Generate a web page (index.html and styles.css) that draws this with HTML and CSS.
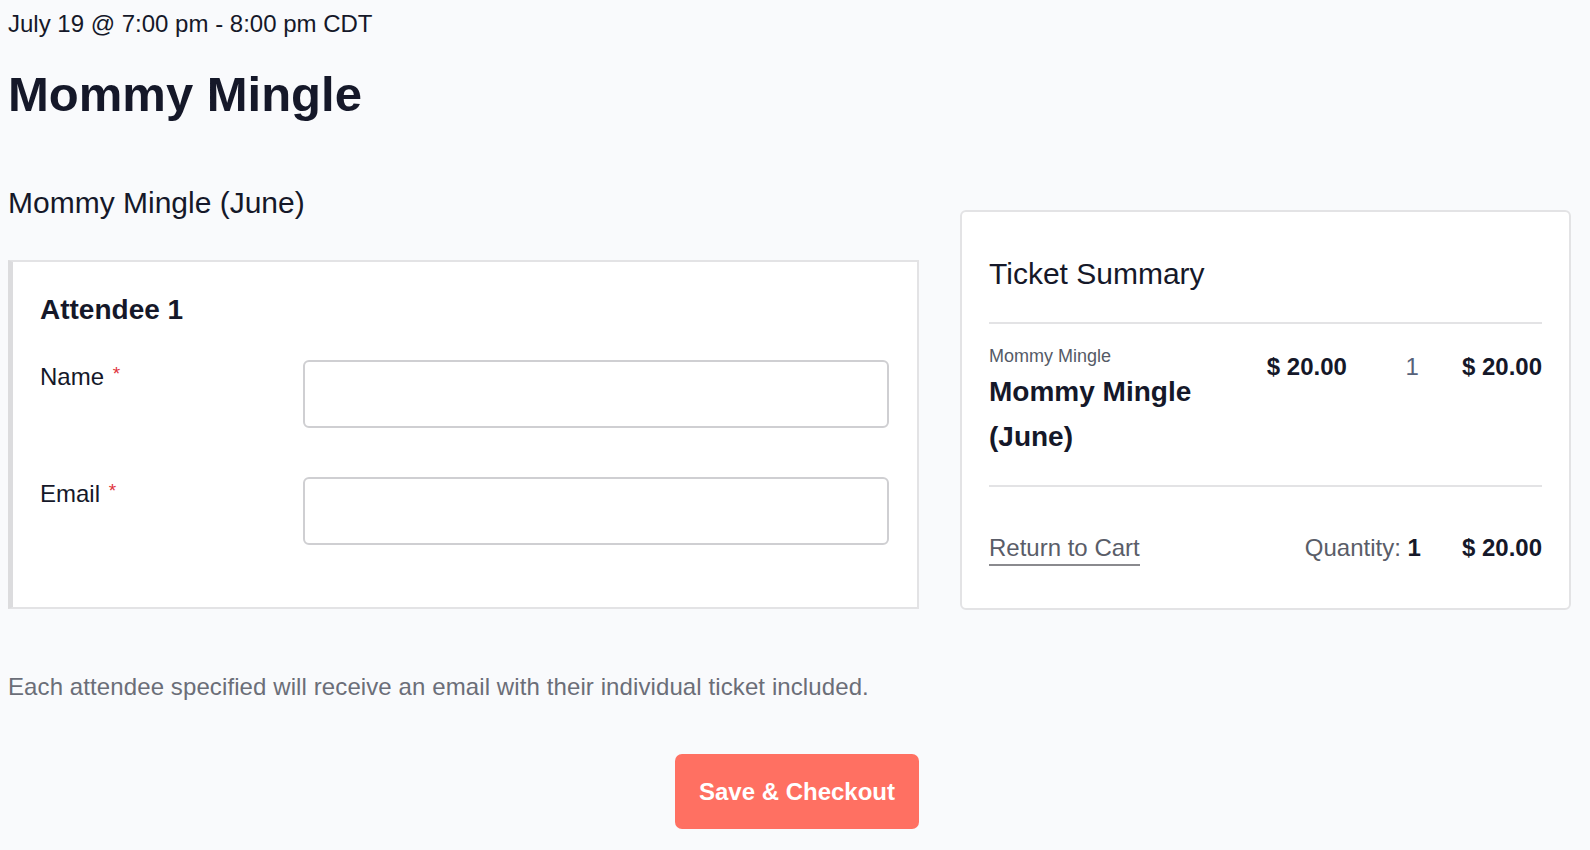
FILE: index.html
```html
<!DOCTYPE html>
<html>
<head>
<meta charset="utf-8">
<link rel="stylesheet" href="styles.css">
</head>
<body>
<div class="page">
  <div class="event-date">July 19 @ 7:00 pm - 8:00 pm CDT</div>
  <h1 class="event-title">Mommy Mingle</h1>
  <div class="layout">
    <div class="main">
      <h2 class="ticket-name">Mommy Mingle (June)</h2>
      <div class="attendee-card">
        <h3 class="attendee-title">Attendee 1</h3>
        <div class="field">
          <label class="field-label">Name <span class="req">*</span></label>
          <input class="field-input" type="text">
        </div>
        <div class="field">
          <label class="field-label">Email <span class="req">*</span></label>
          <input class="field-input" type="text">
        </div>
      </div>
    </div>
    <aside class="summary">
      <h2 class="summary-title">Ticket Summary</h2>
      <div class="summary-item">
        <div class="item-info">
          <div class="item-event">Mommy Mingle</div>
          <div class="item-name">Mommy Mingle (June)</div>
        </div>
        <div class="item-price">$ 20.00</div>
        <div class="item-qty">1</div>
        <div class="item-total">$ 20.00</div>
      </div>
      <div class="summary-footer">
        <a class="return-link" href="#">Return to Cart</a>
        <div class="footer-qty">Quantity: <b>1</b></div>
        <div class="footer-total">$ 20.00</div>
      </div>
    </aside>
  </div>
  <p class="note">Each attendee specified will receive an email with their individual ticket included.</p>
  <div class="actions">
    <button class="checkout-btn">Save &amp; Checkout</button>
  </div>
</div>
</body>
</html>
```
FILE: styles.css
```css
html, body {
  margin: 0;
  background: #f9fafc;
}
body {
  font-family: "Liberation Sans", Arial, sans-serif;
  color: #151829;
}
.page {
  padding: 8px 0 0 8px;
}
.event-date {
  font-size: 24px;
  line-height: 32px;
}
.event-title {
  font-size: 49px;
  font-weight: bold;
  margin: 24px 0 0;
  line-height: 60px;
}
.layout {
  display: flex;
  align-items: flex-start;
  gap: 41px;
}
.main {
  width: 911px;
  flex: none;
}
.ticket-name {
  font-size: 30px;
  font-weight: normal;
  margin: 61px 0 0;
  line-height: 36px;
}
.attendee-card {
  margin-top: 39px;
  background: #fff;
  border: 2px solid #e3e3e5;
  border-left: 5px solid #dcdcde;
  padding: 31px 28px 62px 27px;
}
.attendee-title {
  margin: 0 0 33px;
  font-size: 28px;
  line-height: 34px;
  font-weight: bold;
}
.field {
  display: flex;
  align-items: flex-start;
  margin-bottom: 49px;
}
.field:last-child {
  margin-bottom: 0;
}
.field-label {
  width: 263px;
  flex: none;
  font-size: 24px;
  line-height: 34px;
}
.req {
  color: #e0343c;
  font-size: 19px;
  vertical-align: top;
  line-height: 28px;
  margin-left: 2px;
}
.field-input {
  width: 586px;
  height: 68px;
  box-sizing: border-box;
  border: 2px solid #cfcfd2;
  border-radius: 6px;
  background: #fff;
  margin: 0;
}
.summary {
  width: 611px;
  margin-top: 86px;
  flex: none;
  box-sizing: border-box;
  background: #fff;
  border: 2px solid #e3e3e5;
  border-radius: 6px;
  padding: 42px 27px 42px 27px;
}
.summary-title {
  margin: 0;
  font-size: 30px;
  font-weight: normal;
  line-height: 40px;
  padding-bottom: 28px;
  border-bottom: 2px solid #e3e3e5;
}
.summary-item {
  display: flex;
  align-items: flex-start;
  padding: 21px 0 26px;
  border-bottom: 2px solid #e3e3e5;
}
.item-info {
  flex: 1;
}
.item-event {
  font-size: 18px;
  color: #555a66;
  line-height: 22px;
}
.item-name {
  margin-top: 2px;
  font-size: 28px;
  font-weight: bold;
  line-height: 45px;
  width: 250px;
}
.item-price, .item-total {
  font-size: 24px;
  font-weight: bold;
  line-height: 28px;
  margin-top: 8px;
}
.item-price {
  margin-right: 52px;
}
.item-qty {
  font-size: 24px;
  line-height: 28px;
  margin-top: 8px;
  color: #56627a;
  width: 20px;
  text-align: right;
  margin-right: 43px;
}
.summary-footer {
  display: flex;
  align-items: flex-start;
  padding-top: 47px;
}
.return-link {
  font-size: 24px;
  color: #5a5d68;
  text-decoration: none;
  border-bottom: 2px solid #8a8a8e;
  line-height: 28px;
  padding-bottom: 2px;
  margin-right: auto;
}
.footer-qty {
  font-size: 24px;
  line-height: 28px;
  color: #5a5d68;
  margin-right: 41px;
}
.footer-qty b {
  color: #151829;
}
.footer-total {
  font-size: 24px;
  line-height: 28px;
  font-weight: bold;
}
.note {
  margin: 62px 0 0;
  font-size: 24px;
  line-height: 30px;
  letter-spacing: 0.1px;
  color: #6b6e78;
}
.actions {
  width: 911px;
  display: flex;
  justify-content: flex-end;
  margin-top: 52px;
}
.checkout-btn {
  width: 244px;
  height: 75px;
  background: #ff7062;
  border: none;
  border-radius: 7px;
  color: #fff;
  font-family: "Liberation Sans", Arial, sans-serif;
  font-weight: bold;
  font-size: 24px;
}
```
